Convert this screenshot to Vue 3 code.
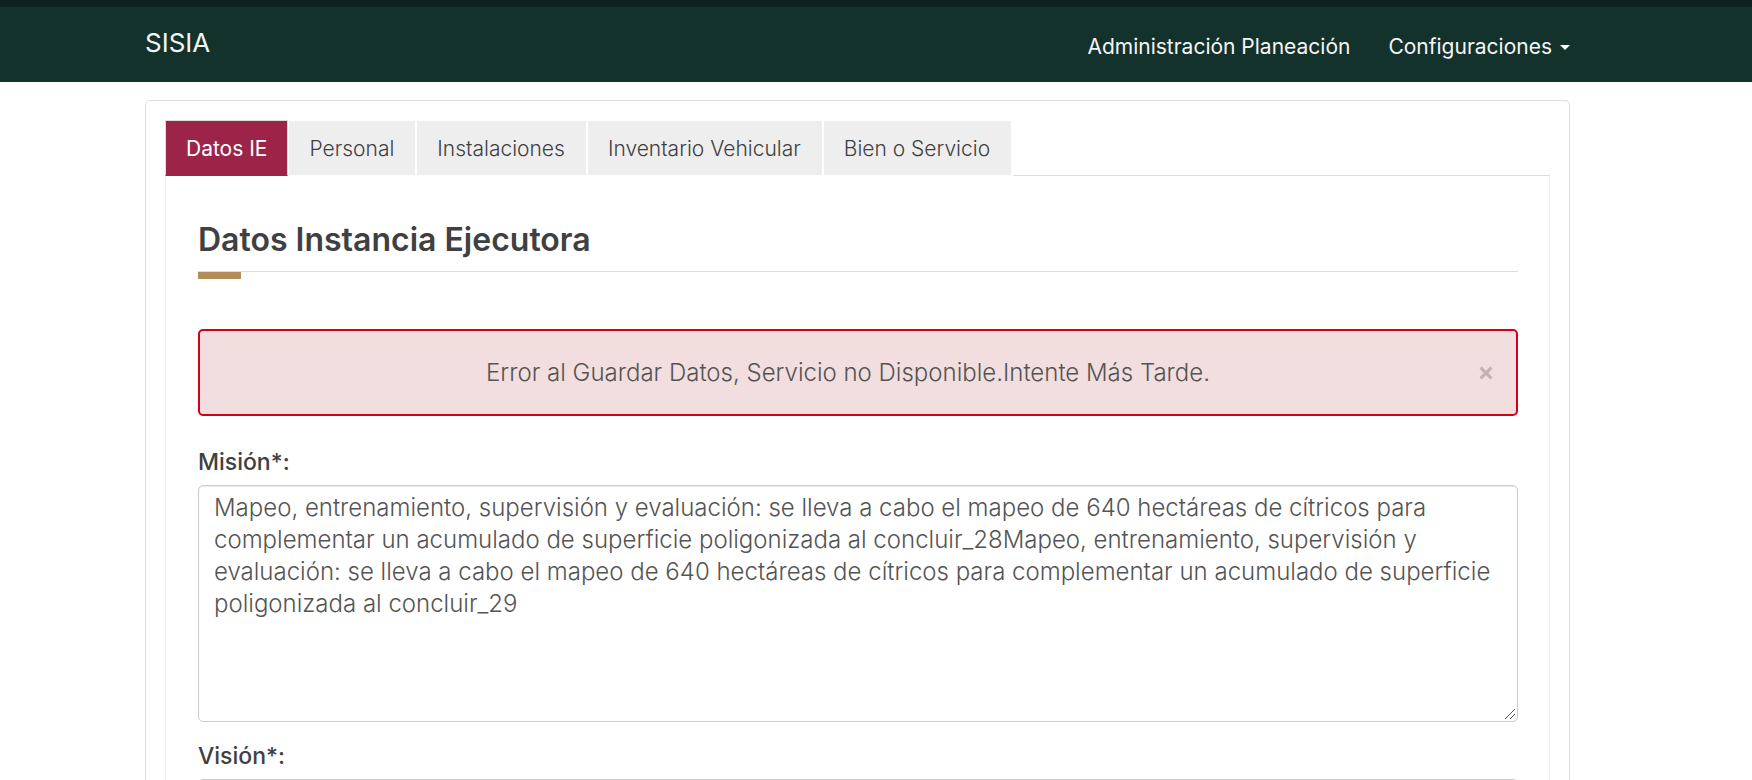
<script setup>
import { ref } from 'vue'

const tabs = ['Datos IE', 'Personal', 'Instalaciones', 'Inventario Vehicular', 'Bien o Servicio']
const active = ref(0)
const showAlert = ref(true)
const mision = ref(
  'Mapeo, entrenamiento, supervisión y evaluación: se lleva a cabo el mapeo de 640 hectáreas de cítricos para complementar un acumulado de superficie poligonizada al concluir_28Mapeo, entrenamiento, supervisión y evaluación: se lleva a cabo el mapeo de 640 hectáreas de cítricos para complementar un acumulado de superficie poligonizada al concluir_29'
)
const vision = ref('')
</script>

<template>
  <div class="page">
    <header class="navbar">
      <div class="container navbar-row">
        <a class="brand" href="#">SISIA</a>
        <nav class="menu">
          <a href="#">Administración Planeación</a>
          <a href="#" aria-haspopup="true">Configuraciones<span class="caret"></span></a>
        </nav>
      </div>
    </header>
    <main class="content">
      <div class="container panel">
        <div class="tabs" role="tablist">
          <button
            v-for="(tab, i) in tabs"
            :key="tab"
            type="button"
            role="tab"
            class="tab"
            :class="{ active: i === active }"
            :aria-selected="i === active"
            @click="active = i"
          >{{ tab }}</button>
          <span class="tabs-rest"></span>
        </div>
        <section class="pane" role="tabpanel">
          <h3 class="title">Datos Instancia Ejecutora</h3>
          <div class="rule"></div>
          <div v-if="showAlert" class="alert" role="alert">
            <p>Error al Guardar Datos, Servicio no Disponible.Intente Más Tarde.</p>
            <button type="button" class="close" aria-label="Cerrar" @click="showAlert = false">
              <svg width="14" height="14" viewBox="0 0 14 14" aria-hidden="true">
                <path d="M1.6 1.6 12.4 12.4M12.4 1.6 1.6 12.4" stroke="currentColor" stroke-width="3.2" />
              </svg>
            </button>
          </div>
          <div class="field">
            <label for="mision">Misión*:</label>
            <textarea id="mision" v-model="mision" spellcheck="false"></textarea>
          </div>
          <div class="field">
            <label for="vision">Visión*:</label>
            <textarea id="vision" v-model="vision" spellcheck="false"></textarea>
          </div>
        </section>
      </div>
    </main>
  </div>
</template>

<style>
body {
  margin: 0;
  background: #fff;
}
</style>

<style scoped>
.page {
  height: 100vh;
  overflow: hidden;
  font-family: Inter, "Open Sans", sans-serif;
  font-size: 24px;
  font-weight: 300;
  line-height: 32px;
  color: #545454;
}
.page * {
  box-sizing: border-box;
}
.navbar {
  height: 82px;
  padding-right: 37px;
  border-top: 7px solid #0c231e;
  background: #13322b;
}
.content {
  padding: 18px 37px 0 0;
}
.container {
  max-width: 1425px;
  margin: 0 auto;
}
.navbar-row {
  display: flex;
  justify-content: space-between;
  align-items: flex-start;
}
.brand {
  padding-top: 20px;
  font-size: 26px;
  font-weight: 400;
  color: #f5f5f5;
  text-decoration: none;
}
.menu {
  display: flex;
  gap: 38px;
  padding-top: 24px;
}
.menu a {
  display: flex;
  align-items: center;
  font-size: 21px;
  font-weight: 400;
  color: #f5f5f5;
  text-decoration: none;
}
.caret {
  margin-left: 8px;
  border-top: 5px solid #fff;
  border-left: 5px solid transparent;
  border-right: 5px solid transparent;
}
.panel {
  padding: 19px 19px 0;
  border: 1px solid #ddd;
  border-radius: 5px;
}
.tabs {
  display: flex;
}
.tab {
  height: 56px;
  margin-right: 1px;
  padding: 0 21px 0 20px;
  border: 0 solid #fff;
  border-width: 1px 1px 1px 0;
  background: #eee;
  font-family: inherit;
  font-size: 21px;
  font-weight: 300;
  color: #404041;
  white-space: nowrap;
}
.tab.active {
  padding: 0 20px;
  border: 1px solid #ddd;
  border-bottom-color: #9d2449;
  background: #9d2449;
  color: #fff;
  font-weight: 400;
}
.tabs-rest {
  flex: 1;
  border-bottom: 1px solid #ddd;
}
.pane {
  padding: 44px 31px 0 32px;
  border: 1px solid #eee;
  border-top: 0;
}
.title {
  margin: 0;
  font-size: 32px;
  font-weight: 600;
  line-height: 39px;
  color: #404041;
}
.rule {
  margin: 12px 0 50px;
  border-top: 1px solid #ddd;
}
.rule::before {
  content: "";
  display: block;
  width: 43px;
  height: 7px;
  background: #b38e5d;
}
.alert {
  display: flex;
  align-items: center;
  height: 87px;
  margin-bottom: 30px;
  padding: 0 23px 0 17px;
  border: 2px solid #d0021b;
  border-radius: 5px;
  background: #f2dede;
}
.alert p {
  flex: 1;
  margin: 0;
  text-align: center;
}
.close {
  display: flex;
  padding: 0;
  border: 0;
  background: none;
  color: #c2b2b2;
}
.field {
  margin-bottom: 18px;
}
label {
  display: block;
  margin-bottom: 7px;
  font-size: 23px;
  font-weight: 500;
  color: #404041;
}
textarea {
  display: block;
  width: 100%;
  height: 237px;
  padding: 6px 15px;
  border: 1px solid #ccc;
  border-radius: 5px;
  box-shadow: inset 0 1px 1px rgba(0, 0, 0, 0.08);
  background: #fff;
  font: inherit;
  color: #545454;
  resize: vertical;
}
textarea::-webkit-resizer {
  background: url("data:image/svg+xml,%3Csvg xmlns='http://www.w3.org/2000/svg' width='15' height='15'%3E%3Cpath d='M3 13 13 3M8 13l5-5' stroke='%23555'/%3E%3C/svg%3E") no-repeat right bottom;
}
</style>
